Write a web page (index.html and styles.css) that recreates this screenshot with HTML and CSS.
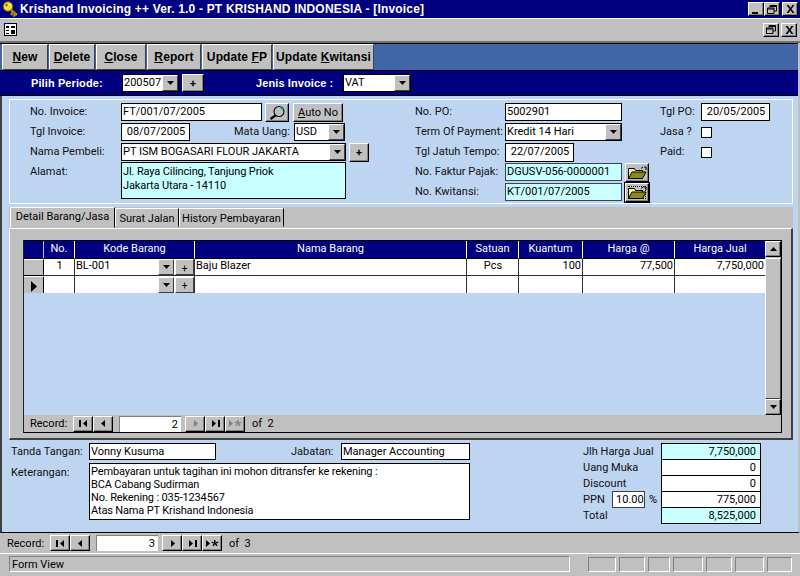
FILE: index.html
```html
<!DOCTYPE html>
<html lang="id">
<head>
<meta charset="utf-8">
<title>Krishand Invoicing</title>
<link rel="stylesheet" href="styles.css">
</head>
<body>
<svg class="defs" width="0" height="0">
  <symbol id="arrow" viewBox="0 0 7 4"><path d="M0 0h7L3.500 4z" fill="#000"/></symbol>
  <symbol id="first" viewBox="0 0 9 7"><path d="M0 0h2v7H0zM8 0v7L4 3.500z" fill="currentColor"/></symbol>
  <symbol id="prev" viewBox="0 0 9 7"><path d="M6 0v7L2 3.500z" fill="currentColor"/></symbol>
  <symbol id="next" viewBox="0 0 9 7"><path d="M3 0v7l4-3.500z" fill="currentColor"/></symbol>
  <symbol id="last" viewBox="0 0 9 7"><path d="M1 0v7l4-3.500zM7 0h2v7H7z" fill="currentColor"/></symbol>
  <symbol id="new" viewBox="0 0 13 7"><path d="M0 0v7l4-3.500zM8 0h1.500v2.500L12 1.500l.5 1.300-2.400.7 1.500 2-1.100.8L9 4.300 7.500 6.300l-1.100-.8 1.500-2-2.400-.7.500-1.300L8 2.500z" fill="currentColor"/></symbol>
  <symbol id="restore" viewBox="0 0 10 9"><path d="M3 .5h6.500v5.500H7M3 .5V2.500M3 1.500h6.500M.5 3h6.500v5.500H.5zM.5 4h6.500" fill="none" stroke="#000"/></symbol>
  <symbol id="close" viewBox="0 0 9 8"><path d="M.5 0h2l2 2.800L6.500 0h2l-3 4 3 4h-2l-2-2.800L2.500 8h-2l3-4z" fill="#000"/></symbol>
  <symbol id="folder" viewBox="0 0 20 13"><path d="M1.500 2.500h6l1 2h7v8h-14z" fill="#f2f290" stroke="#000"/><path d="M1.500 12.500l3.500-6.500h14l-3.500 6.500z" fill="#8a8a18" stroke="#000"/><path d="M14 2.500l2-1.500M17 1h2v3" fill="none" stroke="#000"/></symbol>
</svg>
<div class="window">
  <header class="titlebar">
    <svg class="key" viewBox="0 0 17 16"><path d="M8 8l7 6M11 11l-2 3M13.500 13l-2 2.500" stroke="#a88a00" stroke-width="2.400" fill="none"/><circle cx="6" cy="5.500" r="4.800" fill="#f6dc30" stroke="#6a5a00"/><circle cx="4.500" cy="4" r="1.200" fill="#7a6a00"/><circle cx="7.500" cy="3.800" r=".9" fill="#fffbd0"/></svg>
    <span class="title-text">Krishand Invoicing ++ Ver. 1.0 - PT KRISHAND INDONESIA - [Invoice]</span>
    <span class="winbtn first-btn"><span class="minline"></span></span>
    <span class="winbtn"><svg class="wi"><use href="#restore"/></svg></span>
    <span class="winbtn gap-btn"><svg class="wx"><use href="#close"/></svg></span>
  </header>
  <div class="mdibar">
    <svg class="formicon" viewBox="0 0 13 13"><rect x=".5" y=".5" width="12" height="12" fill="#fff" stroke="#000"/><path d="M2 3h3v2H2zM7 3h4v2H7zM2 7h3v1H2zM7 7h4v4H7zM2 10h3v1H2z" fill="#000"/></svg>
    <span class="winbtn mdi-first"><svg class="wi"><use href="#restore"/></svg></span>
    <span class="winbtn gap-btn"><svg class="wx"><use href="#close"/></svg></span>
  </div>
  <nav class="toolbar">
    <button class="tool t-new"><u>N</u>ew</button>
    <button class="tool t-del"><u>D</u>elete</button>
    <button class="tool t-close"><u>C</u>lose</button>
    <button class="tool t-rep"><u>R</u>eport</button>
    <button class="tool t-fp">Update <u>F</u>P</button>
    <button class="tool t-kw">Update <u>K</u>witansi</button>
  </nav>
  <div class="band">
    <span class="band-label l-periode">Pilih Periode:</span>
    <span class="combo c-periode"><span class="val">200507</span><span class="drop"><svg class="ar"><use href="#arrow"/></svg></span></span>
    <button class="btn plus p-periode">+</button>
    <span class="band-label l-jenis">Jenis Invoice :</span>
    <span class="combo c-jenis"><span class="val">VAT</span><span class="drop"><svg class="ar"><use href="#arrow"/></svg></span></span>
  </div>
  <main class="main">
    <section class="panel">
      <div class="col col-a">
        <div class="row">
          <label class="lab w91">No. Invoice:</label><span class="field f-inv">FT/001/07/2005</span>
          <button class="btn b-find"><svg class="mag" viewBox="0 0 18 15"><circle cx="11" cy="6.500" r="5" fill="none" stroke="#000" stroke-width="1.100"/><path d="M12 2.500a4 4 0 0 1 3 3" stroke="#00b8c8" fill="none" stroke-width="1.600"/><path d="M7.500 10.500l-5 3.500" stroke="#000" stroke-width="2.200"/></svg></button>
          <button class="btn b-auto"><u>A</u>uto No</button>
        </div>
        <div class="row">
          <label class="lab w91">Tgl Invoice:</label><span class="field f-date ctr">08/07/2005</span>
          <label class="lab l-uang">Mata Uang:</label>
          <span class="combo c-uang"><span class="val">USD</span><span class="drop"><svg class="ar"><use href="#arrow"/></svg></span></span>
        </div>
        <div class="row">
          <label class="lab w91">Nama Pembeli:</label>
          <span class="combo c-nama"><span class="val">PT ISM BOGASARI FLOUR JAKARTA</span><span class="drop"><svg class="ar"><use href="#arrow"/></svg></span></span>
          <button class="btn plus p-nama">+</button>
        </div>
        <div class="row row-tall">
          <label class="lab w91">Alamat:</label>
          <span class="field cyan f-alamat">Jl. Raya Cilincing, Tanjung Priok<br>Jakarta Utara - 14110</span>
        </div>
      </div>
      <div class="col col-b">
        <div class="row"><label class="lab w90">No. PO:</label><span class="field f-po">5002901</span></div>
        <div class="row"><label class="lab w90">Term Of Payment:</label><span class="combo c-term"><span class="val">Kredit 14 Hari</span><span class="drop"><svg class="ar"><use href="#arrow"/></svg></span></span></div>
        <div class="row"><label class="lab w90">Tgl Jatuh Tempo:</label><span class="field f-tempo ctr">22/07/2005</span></div>
        <div class="row"><label class="lab w90">No. Faktur Pajak:</label><span class="field cyan f-po grey-b">DGUSV-056-0000001</span><button class="btn b-folder"><svg class="fold"><use href="#folder"/></svg></button></div>
        <div class="row"><label class="lab w90">No. Kwitansi:</label><span class="field cyan f-po grey-b">KT/001/07/2005</span><button class="btn b-folder b-focus"><svg class="fold"><use href="#folder"/></svg></button></div>
      </div>
      <div class="col col-c">
        <div class="row"><label class="lab w41">Tgl PO:</label><span class="field f-tglpo ctr">20/05/2005</span></div>
        <div class="row"><label class="lab w41">Jasa ?</label><span class="check"></span></div>
        <div class="row"><label class="lab w41">Paid:</label><span class="check"></span></div>
      </div>
    </section>
    <section class="tabs">
      <div class="tabstrip">
        <span class="tab active">Detail Barang/Jasa</span>
        <span class="tab t2">Surat Jalan</span>
        <span class="tab t3">History Pembayaran</span>
      </div>
      <div class="tabpage">
        <div class="grid">
          <div class="grid-top">
            <div class="grid-area">
              <table class="tbl">
                <colgroup><col class="k0"><col class="k1"><col class="k2"><col class="k3"><col class="k4"><col class="k5"><col class="k6"><col class="k7"></colgroup>
                <thead><tr><th></th><th>No.</th><th>Kode Barang</th><th>Nama Barang</th><th>Satuan</th><th>Kuantum</th><th>Harga @</th><th>Harga Jual</th></tr></thead>
                <tbody>
                  <tr><td class="sel"></td><td class="ctr">1</td><td class="kode"><span class="kode-t">BL-001</span><span class="mini"><svg class="ar"><use href="#arrow"/></svg></span><span class="mini wide">+</span></td><td>Baju Blazer</td><td class="ctr">Pcs</td><td class="num">100</td><td class="num">77,500</td><td class="num">7,750,000</td></tr>
                  <tr><td class="sel"><svg class="ptr" viewBox="0 0 6 11"><path d="M0 0l6 5.500L0 11z" fill="#000"/></svg></td><td></td><td class="kode"><span class="kode-t"></span><span class="mini"><svg class="ar"><use href="#arrow"/></svg></span><span class="mini wide">+</span></td><td></td><td></td><td></td><td></td><td></td></tr>
                </tbody>
              </table>
            </div>
            <div class="scroll">
              <span class="sbtn"><svg class="ar up"><use href="#arrow"/></svg></span>
              <span class="strack"></span>
              <span class="sbtn"><svg class="ar"><use href="#arrow"/></svg></span>
            </div>
          </div>
          <div class="nav nav-in">
            <span class="nav-lab">Record:</span>
            <span class="nb"><svg class="ni"><use href="#first"/></svg></span><span class="nb"><svg class="ni"><use href="#prev"/></svg></span>
            <span class="nf">2</span>
            <span class="nb off"><svg class="ni"><use href="#next"/></svg></span><span class="nb"><svg class="ni"><use href="#last"/></svg></span><span class="nb off"><svg class="nw"><use href="#new"/></svg></span>
            <span class="nav-of">of&nbsp; 2</span>
          </div>
        </div>
      </div>
    </section>
    <section class="foot">
      <div class="foot-left">
        <div class="frow">
          <label class="lab w78">Tanda Tangan:</label><span class="field f-ttd">Vonny Kusuma</span>
          <label class="lab l-jab">Jabatan:</label><span class="field f-jab">Manager Accounting</span>
        </div>
        <div class="frow frow2">
          <label class="lab w78">Keterangan:</label>
          <span class="field f-ket">Pembayaran untuk tagihan ini mohon ditransfer ke rekening :<br>BCA Cabang Sudirman<br>No. Rekening : 035-1234567<br>Atas Nama PT Krishand Indonesia</span>
        </div>
      </div>
      <div class="foot-right">
        <div class="trow"><label class="lab tl">Jlh Harga Jual</label><span class="tv cyan">7,750,000</span></div>
        <div class="trow"><label class="lab tl">Uang Muka</label><span class="tv">0</span></div>
        <div class="trow"><label class="lab tl">Discount</label><span class="tv">0</span></div>
        <div class="trow"><label class="lab l-ppn">PPN</label><span class="field f-ppn">10.00</span><span class="pct">%</span><span class="tv">775,000</span></div>
        <div class="trow"><label class="lab tl">Total</label><span class="tv cyan">8,525,000</span></div>
      </div>
    </section>
  </main>
  <div class="nav nav-out">
    <span class="nav-lab">Record:</span>
    <span class="nb"><svg class="ni"><use href="#first"/></svg></span><span class="nb"><svg class="ni"><use href="#prev"/></svg></span>
    <span class="nf">3</span>
    <span class="nb"><svg class="ni"><use href="#next"/></svg></span><span class="nb"><svg class="ni"><use href="#last"/></svg></span><span class="nb"><svg class="nw"><use href="#new"/></svg></span>
    <span class="nav-of">of&nbsp; 3</span>
  </div>
  <footer class="status">
    <span class="st-main">Form View</span>
    <span class="st s1"></span><span class="st s2"></span><span class="st s3"></span><span class="st s4"></span><span class="st s5"></span><span class="st s6"></span><span class="st s7"></span>
  </footer>
</div>
</body>
</html>
```
FILE: styles.css
```css
* { box-sizing: border-box; }
html, body { margin: 0; padding: 0; background: #c0c0c0; }
.defs { position: absolute; }
.window { width: 800px; height: 576px; overflow: hidden; display: flex; flex-direction: column; font: 11px/13px Roboto, "Liberation Sans", Arial, sans-serif; color: #000; }
button { font: inherit; letter-spacing: inherit; padding: 0; color: #000; }
u { text-decoration: underline; }

.titlebar { height: 18px; background: #000080; color: #fff; display: flex; align-items: center; padding-left: 2px; flex: none; }
.key { width: 17px; height: 16px; margin-right: 1px; }
.title-text { font: 700 12px/13px "Liberation Sans", Arial, sans-serif; letter-spacing: .18px; white-space: nowrap; }
.winbtn { width: 16px; height: 14px; background: #c0c0c0; border: 1px solid; border-color: #fff #000 #000 #fff; box-shadow: inset -1px -1px #808080; display: flex; align-items: center; justify-content: center; flex: none; position: relative; }
.first-btn { margin-left: auto; }
.gap-btn { margin-left: 2px; margin-right: 2px; }
.minline { width: 6px; height: 2px; background: #000; margin-top: 7px; margin-right: 2px; }
.wi { width: 10px; height: 9px; }
.wx { width: 9px; height: 8px; }

.mdibar { height: 25px; flex: none; background: #c0c0c0; border-top: 1px solid #fff; border-bottom: 2px solid #707070; display: flex; align-items: center; padding: 0 1px 1px 4px; }
.formicon { width: 13px; height: 13px; }
.mdi-first { margin-left: auto; }

.toolbar { height: 28px; flex: none; background: #4066a8; border-top: 1px solid #000; border-bottom: 1px solid #000; display: flex; padding-left: 2px; margin-right: 2px; }
.tool { height: 26px; font: 700 12px/13px "Liberation Sans", Arial, sans-serif; letter-spacing: .1px; background: #c0c0c0; border: 1px solid; border-color: #fff #404040 #404040 #fff; margin-right: 1px; white-space: nowrap; }
.t-new { width: 46px; } .t-del { width: 46px; } .t-close { width: 50px; } .t-rep { width: 54px; } .t-fp { width: 70px; } .t-kw { width: 101px; }

.band { height: 25px; flex: none; background: #000080; border-bottom: 1px solid #000; display: flex; align-items: center; margin-right: 2px; }
.band-label { color: #fff; font: 700 11px/13px "Liberation Sans", Arial, sans-serif; letter-spacing: .1px; white-space: nowrap; }
.l-periode { margin-left: 31px; width: 91px; }
.l-jenis { margin-left: 52px; width: 87px; }

.combo { display: flex; height: 18px; background: #fff; border: 1px solid #000; flex: none; align-items: stretch; }
.val { flex: 1; padding: 1px 0 0 1px; white-space: nowrap; overflow: hidden; }
.drop { width: 16px; background: #c0c0c0; border: 1px solid; border-color: #fff #404040 #404040 #fff; display: flex; align-items: center; justify-content: center; flex: none; }
.ar { width: 7px; height: 4px; }
.up { transform: rotate(180deg); }
.c-periode { width: 57px; }
.c-jenis { width: 68px; }
.btn { background: #c0c0c0; border: 1px solid; border-color: #fff #000 #000 #fff; box-shadow: inset -1px -1px #808080; flex: none; display: flex; align-items: center; justify-content: center; }
.plus { font-weight: 700; }
.p-periode { width: 22px; height: 18px; margin-left: 3px; }

.main { flex: none; height: 437px; background: #bed5f1; border-left: 2px solid #404040; border-right: 2px solid #c0c0c0; border-bottom: 1px solid #000; padding-top: 3px; }
.lab { flex: none; white-space: nowrap; color: #101010; margin-bottom: 2px; }
.field { display: block; background: #fff; border: 1px solid #000; flex: none; padding: 1px 0 0 1px; white-space: nowrap; overflow: hidden; }
.ctr { text-align: center; }
.cyan { background: #c8ffff; }
.grey-b { border-color: #404060; }

.panel { display: flex; height: 105px; margin: 0 5px 0 7px; border: 1px solid #fff; padding-top: 2px; }
.col { display: flex; flex-direction: column; flex: none; }
.col-a { width: 385px; margin-left: 20px; }
.col-b { width: 245px; }
.col-c { width: 110px; }
.row { height: 20px; display: flex; align-items: center; flex: none; }
.row-tall { height: 37px; align-items: flex-start; }
.row-tall .lab { padding-top: 3px; }
.w91 { width: 91px; } .w90 { width: 90px; } .w41 { width: 41px; } .w78 { width: 78px; }
.f-inv { width: 141px; height: 18px; }
.b-find { width: 24px; height: 19px; margin-left: 3px; }
.mag { width: 18px; height: 15px; }
.b-auto { width: 50px; height: 19px; margin-left: 4px; }
.f-date { width: 69px; height: 18px; }
.l-uang { margin-left: 44px; width: 60px; }
.c-uang { width: 51px; height: 18px; }
.c-nama { width: 225px; }
.p-nama { width: 20px; height: 19px; margin-left: 3px; }
.f-alamat { width: 225px; height: 37px; padding-top: 2px; line-height: 14px; letter-spacing: -.12px; }
.f-po { width: 117px; height: 18px; }
.c-term { width: 117px; }
.f-tempo { width: 69px; height: 19px; }
.b-folder { width: 24px; height: 19px; margin-left: 3px; }
.b-focus { outline: 1px solid #000; outline-offset: 0; border-color: #fff #000 #000 #fff; position: relative; }
.b-focus::after { content: ""; position: absolute; inset: 2px; border: 1px dotted #000; }
.fold { width: 20px; height: 13px; }
.f-tglpo { width: 69px; height: 18px; }
.check { width: 11px; height: 11px; background: #fff; border: 1px solid #000; }

.tabs { height: 233px; margin: 3px 5px 0 7px; background: #c0c0c0; display: flex; flex-direction: column; }
.tabstrip { height: 21px; display: flex; align-items: flex-end; padding-left: 1px; flex: none; position: relative; z-index: 1; }
.tab { height: 19px; padding-top: 3px; text-align: center; white-space: nowrap; background: #c0c0c0; border: 1px solid; border-color: #fff #000 transparent #fff; }
.active { width: 105px; height: 21px; padding-top: 2px; }
.t2 { width: 64px; margin-bottom: 1px; }
.t3 { width: 105px; margin-bottom: 1px; }
.tabpage { flex: 1; border-top: 1px solid #fff; border-left: 1px solid #fff; border-right: 2px solid #404040; border-bottom: 2px solid #404040; padding: 11px 0 0 13px; }
.grid { width: 759px; height: 193px; border: 1px solid #000; border-left-color: #202020; display: flex; flex-direction: column; background: #c0c0c0; }
.grid-top { height: 174px; display: flex; flex: none; }
.grid-area { width: 741px; background: #bed5f1; flex: none; }
.tbl { width: 741px; table-layout: fixed; border-collapse: separate; border-spacing: 0; }
.k0 { width: 20px; } .k1 { width: 31px; } .k2 { width: 120px; } .k3 { width: 272px; } .k4 { width: 52px; } .k5 { width: 64px; } .k6 { width: 92px; } .k7 { width: 90px; }
.tbl th { height: 18px; background: #000080; color: #fff; font-weight: 400; border-right: 1px solid #fff; border-bottom: 1px solid #000; padding: 0 0 2px; }
.tbl th:first-child { border-right-color: #c0c0c0; }
.tbl th:last-child { border-right: 0; }
.tbl td { height: 17px; background: #fff; border-right: 1px solid #303030; border-bottom: 1px solid #303030; padding: 0 0 3px 1px; white-space: nowrap; overflow: hidden; }
.tbl tr:last-child td { border-bottom: 0; }
.tbl td:last-child { border-right: 0; }
.tbl td.sel { background: #c0c0c0; border-color: #000; padding: 0; border-top: 1px solid #fff; }
.tbl td.num { text-align: right; padding-right: 1px; }
.tbl td.ctr { text-align: center; }
.tbl td.kode { padding: 0; }
.ptr { width: 6px; height: 11px; display: block; margin: 2px 0 0 7px; }
.kode-t { display: inline-block; width: 83px; padding-left: 1px; height: 16px; line-height: 14px; vertical-align: top; }
.mini { display: inline-flex; align-items: center; justify-content: center; width: 16px; height: 16px; background: #c0c0c0; border: 1px solid; border-color: #fff #404040 #404040 #fff; vertical-align: top; font-size: 10px; padding-top: 2px; }
.mini .ar { margin-top: -2px; }
.wide { width: 19px; margin-left: 1px; }

.scroll { width: 16px; flex: none; display: flex; flex-direction: column; background: #c0c0c0; }
.sbtn { height: 16px; flex: none; border: 1px solid; border-color: #fff #000 #000 #fff; display: flex; align-items: center; justify-content: center; background: #c0c0c0; box-shadow: inset -1px -1px #808080; }
.strack { flex: 1; border: 1px solid; border-color: #fff #404040 #404040 #fff; margin-top: 1px; }

.nav { display: flex; align-items: center; flex: none; }
.nav-in { height: 17px; padding-left: 6px; }
.nav-out { height: 21px; margin-left: 0; padding-left: 7px; border-bottom: 1px solid #fff; }
.nav-lab { width: 43px; flex: none; }
.nb { width: 20px; height: 16px; background: #c0c0c0; border: 1px solid; border-color: #fff #000 #000 #fff; box-shadow: inset -1px -1px #808080; display: flex; align-items: center; justify-content: center; color: #000; flex: none; }
.off { color: #808080; }
.ni { width: 9px; height: 7px; }
.nw { width: 13px; height: 7px; }
.nf { width: 62px; height: 16px; background: #fff; border-top: 1px solid #808080; border-left: 1px solid #808080; text-align: right; padding: 1px 3px 0 0; margin: 0 4px 0 6px; flex: none; }
.nav-of { margin-left: 7px; }

.foot { display: flex; padding-top: 3px; }
.foot .lab { margin-bottom: 0; }
.foot-left { width: 468px; margin-left: 9px; }
.frow { display: flex; align-items: center; height: 16px; }
.frow2 { align-items: flex-start; height: 57px; margin-top: 4px; }
.frow2 .lab { padding-top: 3px; }
.f-ttd { width: 127px; height: 17px; }
.l-jab { margin-left: 75px; width: 50px; }
.f-jab { width: 129px; height: 17px; }
.f-ket { width: 381px; height: 57px; padding-top: 1px; letter-spacing: -.15px; }
.foot-right { margin-left: 104px; width: 178px; display: flex; flex-direction: column; }
.trow { height: 16px; display: flex; align-items: center; }
.tl { width: 78px; }
.tv { display: block; width: 100px; height: 17px; background: #fff; border: 1px solid #000; text-align: right; padding: 1px 4px 0 0; flex: none; margin-bottom: -1px; }
.tv.cyan { background: #c8ffff; }
.l-ppn { width: 29px; }
.f-ppn { width: 33px; height: 17px; padding-left: 3px; border-color: #404040; }
.pct { width: 16px; padding-left: 4px; flex: none; }

.status { flex: 1; display: flex; align-items: flex-start; padding: 2px 0 0 9px; background: #c0c0c0; }
.st-main { width: 561px; height: 16px; border: 1px solid; border-color: #808080 #fff #fff #808080; padding: 1px 0 0 2px; flex: none; }
.st { height: 15px; border: 1px solid; border-color: #808080 #fff #fff #808080; flex: none; margin-top: 1px; }
.s1 { width: 28px; margin-left: 18px; } .s2 { width: 26px; margin-left: 3px; } .s3 { width: 22px; margin-left: 3px; } .s4 { width: 30px; margin-left: 3px; } .s5 { width: 26px; margin-left: 3px; } .s6 { width: 29px; margin-left: 3px; } .s7 { width: 25px; margin-left: 3px; }
```
